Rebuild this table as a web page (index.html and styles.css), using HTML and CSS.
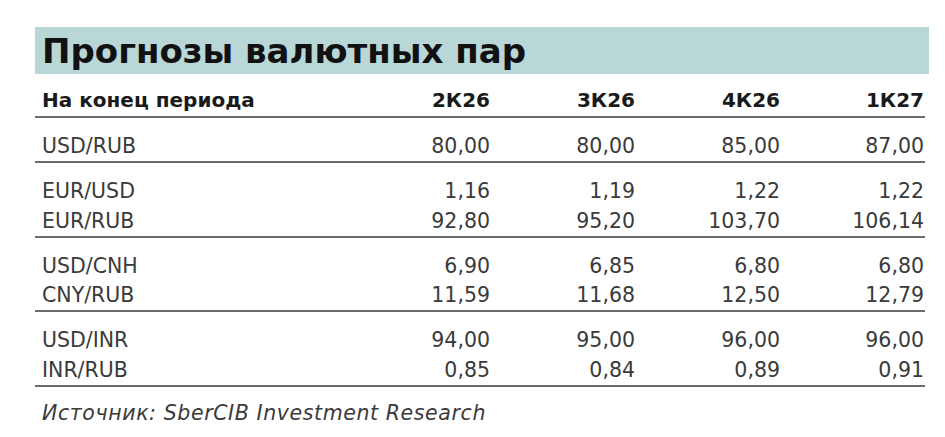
FILE: index.html
```html
<!DOCTYPE html>
<html lang="ru">
<head>
<meta charset="utf-8">
<title>Прогнозы валютных пар</title>
<link rel="stylesheet" href="styles.css">
</head>
<body>
<div class="page">
  <h1 class="title">Прогнозы валютных пар</h1>
  <div class="table">
    <div class="row head">
      <div class="label">На конец периода</div>
      <div class="num">2К26</div>
      <div class="num">3К26</div>
      <div class="num">4К26</div>
      <div class="num">1К27</div>
    </div>
    <div class="group">
      <div class="row"><div class="label">USD/RUB</div><div class="num">80,00</div><div class="num">80,00</div><div class="num">85,00</div><div class="num">87,00</div></div>
    </div>
    <div class="group">
      <div class="row"><div class="label">EUR/USD</div><div class="num">1,16</div><div class="num">1,19</div><div class="num">1,22</div><div class="num">1,22</div></div>
      <div class="row"><div class="label">EUR/RUB</div><div class="num">92,80</div><div class="num">95,20</div><div class="num">103,70</div><div class="num">106,14</div></div>
    </div>
    <div class="group">
      <div class="row"><div class="label">USD/CNH</div><div class="num">6,90</div><div class="num">6,85</div><div class="num">6,80</div><div class="num">6,80</div></div>
      <div class="row"><div class="label">CNY/RUB</div><div class="num">11,59</div><div class="num">11,68</div><div class="num">12,50</div><div class="num">12,79</div></div>
    </div>
    <div class="group">
      <div class="row"><div class="label">USD/INR</div><div class="num">94,00</div><div class="num">95,00</div><div class="num">96,00</div><div class="num">96,00</div></div>
      <div class="row"><div class="label">INR/RUB</div><div class="num">0,85</div><div class="num">0,84</div><div class="num">0,89</div><div class="num">0,91</div></div>
    </div>
  </div>
  <p class="source">Источник: SberCIB Investment Research</p>
</div>
</body>
</html>
```
FILE: styles.css
```css
html, body {
  margin: 0;
  padding: 0;
  background: #ffffff;
}

.page {
  padding: 27px 0 0 35px;
  font-family: "DejaVu Sans", Verdana, sans-serif;
  color: #3a3a3a;
}

.title {
  margin: 0;
  width: 894px;
  height: 47px;
  box-sizing: border-box;
  padding-left: 7px;
  background: #b9d7d7;
  font-family: "DejaVu Sans", Verdana, sans-serif;
  font-weight: bold;
  font-size: 34px;
  line-height: 49px;
  color: #111111;
}

.table {
  width: 890px;
}

.row {
  display: grid;
  grid-template-columns: 310px 145px 145px 145px 144px;
  font-size: 20.5px;
  line-height: 29.25px;
}

.label {
  padding-left: 7px;
}

.num {
  text-align: right;
}

.head {
  padding: 14px 0 4px;
  font-size: 20px;
  line-height: 24px;
  font-weight: bold;
  color: #1a1a1a;
  border-bottom: 2px solid #6a6a6a;
}

.group {
  padding: 14px 0 0;
  border-bottom: 2px solid #6a6a6a;
}

.source {
  margin: 0;
  padding: 13px 0 0 7px;
  font-style: italic;
  font-size: 20.5px;
  line-height: 26px;
  letter-spacing: 0.6px;
  color: #3a3a3a;
}
```
